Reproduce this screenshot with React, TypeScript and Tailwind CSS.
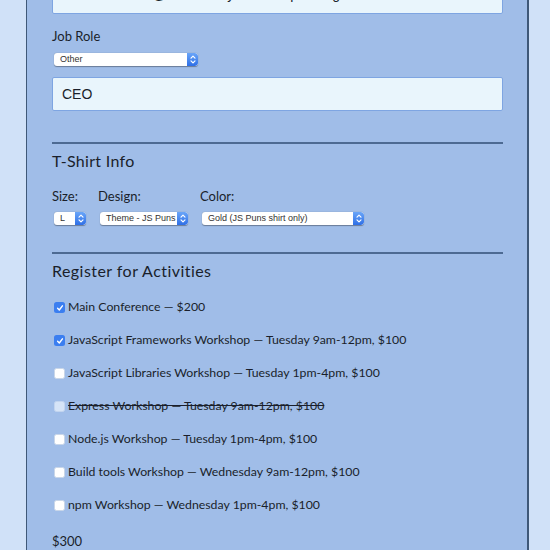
import React from "react";

function Arrow() {
  return (
    <div className="flex h-full w-[11px] shrink-0 items-center justify-center rounded-r-[3px] bg-gradient-to-b from-[#6aa5f8] to-[#2f6fe6]">
      <svg width="6" height="9" viewBox="0 0 6 9" fill="none" stroke="white" strokeWidth="1.2" strokeLinecap="round" strokeLinejoin="round">
        <path d="M1 3.2 L3 1.2 L5 3.2" />
        <path d="M1 5.8 L3 7.8 L5 5.8" />
      </svg>
    </div>
  );
}

function Select({ text, w }: { text: string; w: string }) {
  return (
    <div className={`flex h-[13px] ${w} items-stretch overflow-hidden rounded-[3px] bg-white shadow-[0_0.5px_1px_rgba(0,0,0,0.35)]`}>
      <div
        className="flex min-w-0 flex-1 items-center overflow-hidden whitespace-nowrap pl-[6px] text-[9px] leading-none text-[#333]"
        style={{ fontFamily: "'Liberation Sans', Arial, sans-serif" }}
      >
        {text}
      </div>
      <Arrow />
    </div>
  );
}

function Check({ state }: { state: "on" | "off" | "disabled" }) {
  if (state === "on") {
    return (
      <div className="flex h-[11px] w-[11px] items-center justify-center rounded-[2.5px] bg-[#3b7ef0]">
        <svg width="8" height="8" viewBox="0 0 8 8" fill="none" stroke="white" strokeWidth="1.4" strokeLinecap="round" strokeLinejoin="round">
          <path d="M1.6 4.2 L3.3 6 L6.4 1.8" />
        </svg>
      </div>
    );
  }
  if (state === "disabled") {
    return <div className="h-[11px] w-[11px] rounded-[2.5px] border border-[#c3d5ef] bg-[#d6e4f7]" />;
  }
  return <div className="h-[11px] w-[11px] rounded-[2.5px] border border-[#c9d6e8] bg-white" />;
}

const rows: { t: string; s: "on" | "off" | "disabled" }[] = [
  { t: "Main Conference — $200", s: "on" },
  { t: "JavaScript Frameworks Workshop — Tuesday 9am-12pm, $100", s: "on" },
  { t: "JavaScript Libraries Workshop — Tuesday 1pm-4pm, $100", s: "off" },
  { t: "Express Workshop — Tuesday 9am-12pm, $100", s: "disabled" },
  { t: "Node.js Workshop — Tuesday 1pm-4pm, $100", s: "off" },
  { t: "Build tools Workshop — Wednesday 9am-12pm, $100", s: "off" },
  { t: "npm Workshop — Wednesday 1pm-4pm, $100", s: "off" },
];

export default function App() {
  return (
    <div
      className="h-[550px] w-[550px] overflow-hidden bg-[#d0e1f8] text-[#1a1f2b]"
      style={{ fontFamily: "Lato, 'Noto Sans', sans-serif" }}
    >
      <div className="ml-[26px] flex h-[550px] w-[503px] flex-col border-l border-r-2 border-[#3f5878] bg-[#a0bde8] pl-[25px] pr-[24px]">
        <div
          className="mt-[-20px] flex h-[34px] shrink-0 items-center rounded-[2px] border border-[#7ea5e2] bg-[#e9f5fc] pl-[9px] text-[14px]"
          style={{ fontFamily: "'Liberation Sans', Arial, sans-serif" }}
        >
          <span className="translate-y-[-3px]">info.mails2020@communityschoolnaples.org</span>
        </div>

        <div className="mt-[14px] h-[16px] text-[13px] leading-[16px]">Job Role</div>
        <div className="mt-[9px] ml-[2px]">
          <Select text="Other" w="w-[144px]" />
        </div>
        <div
          className="mt-[11px] flex h-[34px] shrink-0 items-center rounded-[2px] border border-[#7ea5e2] bg-[#e9f5fc] pl-[9px] text-[14px]"
          style={{ fontFamily: "'Liberation Sans', Arial, sans-serif" }}
        >
          CEO
        </div>

        <div className="mt-[31px] h-[2px] shrink-0 bg-[#4d6a92]" />
        <div className="mt-[7px] h-[20px] text-[16px] leading-[20px] tracking-[0.3px]">T-Shirt Info</div>

        <div className="mt-[17px] flex gap-0">
          <div className="w-[46px]">
            <div className="h-[16px] text-[13px] leading-[16px]">Size:</div>
            <div className="mt-[8px] ml-[2px]">
              <Select text="L" w="w-[32px]" />
            </div>
          </div>
          <div className="w-[102px]">
            <div className="h-[16px] text-[13px] leading-[16px]">Design:</div>
            <div className="mt-[8px] ml-[2px]">
              <Select text="Theme - JS Puns" w="w-[88px]" />
            </div>
          </div>
          <div>
            <div className="h-[16px] text-[13px] leading-[16px]">Color:</div>
            <div className="mt-[8px] ml-[2px]">
              <Select text="Gold (JS Puns shirt only)" w="w-[162px]" />
            </div>
          </div>
        </div>

        <div className="mt-[27px] h-[2px] shrink-0 bg-[#4d6a92]" />
        <div className="mt-[7px] h-[20px] text-[16px] leading-[20px] tracking-[0.45px]">Register for Activities</div>

        <div className="mt-[10px] flex flex-col">
          {rows.map((r) => (
            <div key={r.t} className="flex h-[33px] items-center pl-[2px]">
              <Check state={r.s} />
              <span className={`ml-[3px] text-[12.3px] ${r.s === "disabled" ? "line-through" : ""}`}>{r.t}</span>
            </div>
          ))}
        </div>

        <div className="mt-[11px] h-[16px] text-[13px] leading-[16px]">$300</div>
      </div>
    </div>
  );
}
